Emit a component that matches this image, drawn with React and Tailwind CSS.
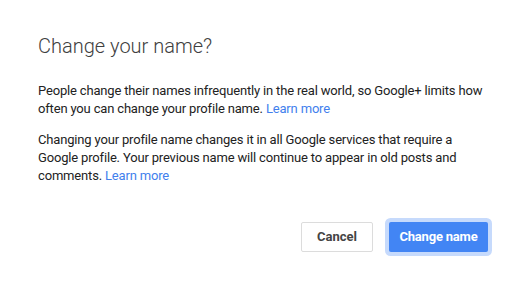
export default function App() {
    return (
        <div
            className="w-[526px] h-[286px] bg-white px-[38px] pt-[34px]"
            style={{ fontFamily: "Roboto, 'Liberation Sans', sans-serif" }}
        >
            <h1 className="text-[20px] leading-[24px] font-light text-[#404040]">Change your name?</h1>

            <div className="mt-[24px] mr-[-20px] text-[13px] leading-[18px] tracking-[-0.17px] text-[#222]">
                <p>
                    People change their names infrequently in the real world, so Google+ limits how
                    <br />
                    often you can change your profile name.{" "}
                    <a className="text-[#427fed]">Learn more</a>
                </p>
                <p className="mt-[13px]">
                    Changing your profile name changes it in all Google services that require a
                    <br />
                    Google profile. Your previous name will continue to appear in old posts and
                    <br />
                    comments. <a className="text-[#427fed]">Learn more</a>
                </p>
            </div>

            {/* Actions */}
            <div className="mt-[37px] flex justify-end gap-4">
                <button className="w-[72px] h-[30px] rounded-[2px] border border-[#dcdcdc] bg-white text-[13px] font-bold text-[#444]">
                    Cancel
                </button>
                <button className="w-[99px] h-[30px] rounded-[2px] bg-[#4285f4] text-[13px] font-bold tracking-[-0.2px] text-white ring-4 ring-[#c6dafc]">
                    Change name
                </button>
            </div>
        </div>
    );
}
